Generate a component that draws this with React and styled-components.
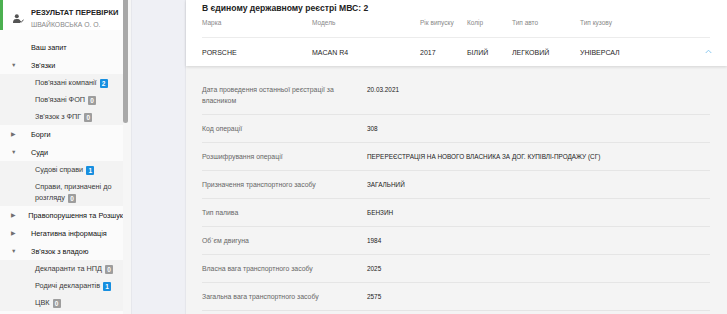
import React from "react";
import styled, { createGlobalStyle } from "styled-components";

const GlobalStyle = createGlobalStyle`
  html, body {
    margin: 0;
    padding: 0;
    overflow: hidden;
  }
  body {
    font-family: "Liberation Sans", Arial, sans-serif;
    -webkit-font-smoothing: antialiased;
  }
`;

const menu = [
  { title: "Ваш запит" },
  {
    title: "Зв'язки",
    open: true,
    children: [
      { title: "Пов'язані компанії", count: 2 },
      { title: "Пов'язані ФОП", count: 0 },
      { title: "Зв'язок з ФПГ", count: 0 },
    ],
  },
  { title: "Борги", open: false },
  {
    title: "Суди",
    open: true,
    children: [
      { title: "Судові справи", count: 1 },
      { title: "Справи, призначені до розгляду", count: 0 },
    ],
  },
  { title: "Правопорушення та Розшук", open: false },
  { title: "Негативна інформація", open: false },
  {
    title: "Зв'язок з владою",
    open: true,
    children: [
      { title: "Декларанти та НПД", count: 0 },
      { title: "Родичі декларантів", count: 1 },
      { title: "ЦВК", count: 0 },
    ],
  },
];

const columns = [
  { label: "Марка", value: "PORSCHE" },
  { label: "Модель", value: "MACAN R4" },
  { label: "Рік випуску", value: "2017" },
  { label: "Колір", value: "БІЛИЙ" },
  { label: "Тип авто", value: "ЛЕГКОВИЙ" },
  { label: "Тип кузову", value: "УНІВЕРСАЛ" },
];

const details = [
  ["Дата проведення останньої реєстрації за власником", "20.03.2021"],
  ["Код операції", "308"],
  ["Розшифрування операції", "ПЕРЕРЕЄСТРАЦІЯ НА НОВОГО ВЛАСНИКА ЗА ДОГ. КУПІВЛІ-ПРОДАЖУ (СГ)"],
  ["Призначення транспортного засобу", "ЗАГАЛЬНИЙ"],
  ["Тип палива", "БЕНЗИН"],
  ["Об`єм двигуна", "1984"],
  ["Власна вага транспортного засобу", "2025"],
  ["Загальна вага транспортного засобу", "2575"],
];

const PersonCheck = () => (
  <svg width="11" height="9" viewBox="0 0 11 9">
    <circle cx="3.8" cy="2.2" r="2" fill="#555" />
    <path d="M0 9 C0 5.6 1.6 5 3.8 5 C6 5 7.2 5.6 7.4 7.2 L7.4 9 Z" fill="#555" />
    <path d="M7 7 L8.3 8.2 L10.6 5.6" fill="none" stroke="#555" strokeWidth="1" />
  </svg>
);

export default function App() {
  return (
    <>
      <GlobalStyle />
      <Page>
        <Sidebar>
          <Nav>
            <Header>
              <HeaderIcon>
                <PersonCheck />
              </HeaderIcon>
              <HeaderText>
                <HeaderTitle>РЕЗУЛЬТАТ ПЕРЕВІРКИ</HeaderTitle>
                <HeaderName>ШВАЙКОВСЬКА О. О.</HeaderName>
              </HeaderText>
            </Header>
            {menu.map((item) => (
              <React.Fragment key={item.title}>
                <TopItem>
                  <Arrow>{item.open === undefined ? "" : item.open ? "▼" : "▶"}</Arrow>
                  {item.title}
                </TopItem>
                {item.open && item.children && (
                  <SubMenu>
                    {item.children.map((c) => (
                      <SubItem key={c.title}>
                        {c.title}
                        <Badge $active={c.count > 0}>{c.count}</Badge>
                      </SubItem>
                    ))}
                  </SubMenu>
                )}
              </React.Fragment>
            ))}
          </Nav>
          <ScrollTrack>
            <Thumb />
          </ScrollTrack>
        </Sidebar>
        <Main>
          <Card>
            <Summary>
              <Title>В єдиному державному реєстрі МВС: 2</Title>
              <HeadRow>
                {columns.map((c) => (
                  <HeadCell key={c.label}>{c.label}</HeadCell>
                ))}
                <span />
              </HeadRow>
              <DataRow>
                {columns.map((c) => (
                  <DataCell key={c.label}>{c.value}</DataCell>
                ))}
                <Chevron>
                  <svg width="7" height="5" viewBox="0 0 7 5">
                    <path d="M0.7 4 L3.5 1.2 L6.3 4" fill="none" stroke="#8cc9f0" strokeWidth="1" />
                  </svg>
                </Chevron>
              </DataRow>
            </Summary>
            <Details>
              {details.map(([label, value]) => (
                <DetailRow key={label}>
                  <DetailLabel>{label}</DetailLabel>
                  <DetailValue>{value}</DetailValue>
                </DetailRow>
              ))}
            </Details>
          </Card>
        </Main>
      </Page>
    </>
  );
}

const Page = styled.div`
  display: flex;
  width: 727px;
  height: 314px;
  overflow: hidden;
  background: #eff0f5;
`;

const Sidebar = styled.div`
  display: flex;
  width: 131px;
  flex-shrink: 0;
  background: #fbfbfb;
  border-right: 1px solid #e6e7ec;
`;

const Nav = styled.div`
  width: 123px;
  display: flex;
  flex-direction: column;
  overflow: hidden;
  white-space: nowrap;
`;

const Header = styled.div`
  display: flex;
  align-items: flex-start;
  height: 30px;
  border-left: 3px solid #4cb050;
  background: #fff;
  margin-bottom: 8px;
`;

const HeaderIcon = styled.div`
  width: 28px;
  padding: 9px 0 0 10px;
  box-sizing: border-box;
`;

const HeaderText = styled.div`
  display: flex;
  flex-direction: column;
  padding-top: 8px;
`;

const HeaderTitle = styled.div`
  font-size: 7.5px;
  line-height: 10px;
  font-weight: 700;
  color: #222;
`;

const HeaderName = styled.div`
  font-size: 6.8px;
  line-height: 10px;
  margin-top: 2px;
  color: #888;
`;

const TopItem = styled.div`
  display: flex;
  align-items: center;
  height: 18px;
  font-size: 7.3px;
  color: #111;
`;

const Arrow = styled.span`
  width: 31px;
  padding-left: 11px;
  box-sizing: border-box;
  font-size: 5.5px;
  color: #6f6f6f;
`;

const SubMenu = styled.div`
  display: flex;
  flex-direction: column;
  background: #f3f3f3;
`;

const SubItem = styled.div`
  padding: 3px 4px 3px 35px;
  font-size: 7.3px;
  line-height: 11px;
  color: #3a3a3a;
  white-space: normal;
`;

const Badge = styled.span`
  display: inline-block;
  min-width: 8px;
  height: 9px;
  margin-left: 3px;
  padding: 0 1px;
  border-radius: 1px;
  box-sizing: border-box;
  background: ${({ $active }) => ($active ? "#178fe0" : "#9d9d9d")};
  color: #fff;
  font-size: 6.5px;
  line-height: 9px;
  font-weight: 700;
  text-align: center;
  vertical-align: middle;
`;

const ScrollTrack = styled.div`
  width: 8px;
  background: #f6f6f6;
`;

const Thumb = styled.div`
  width: 5px;
  height: 123px;
  background: #a8a8a8;
  border-radius: 0 0 3px 3px;
`;

const Main = styled.div`
  flex: 1;
  display: flex;
  padding-left: 54px;
`;

const Card = styled.div`
  flex: 1;
  display: flex;
  flex-direction: column;
  background: #f4f4f4;
  box-shadow: -1px 0 1px rgba(0, 0, 0, 0.04);
`;

const Summary = styled.div`
  background: #fff;
  padding: 0 17px 0 16px;
  box-shadow: 0 1px 3px rgba(0, 0, 0, 0.14);
  position: relative;
  z-index: 1;
`;

const Title = styled.div`
  height: 16px;
  line-height: 16px;
  font-size: 8.6px;
  font-weight: 700;
  color: #222;
`;

const grid = `
  display: grid;
  grid-template-columns: 110px 108px 47px 45px 68px 1fr 14px;
`;

const HeadRow = styled.div`
  ${grid}
  height: 22px;
  padding-top: 2px;
  box-sizing: border-box;
  border-bottom: 1px solid #ececec;
`;

const HeadCell = styled.div`
  font-size: 6.5px;
  line-height: 10px;
  color: #888;
`;

const DataRow = styled.div`
  ${grid}
  height: 28px;
  align-items: center;
`;

const DataCell = styled.div`
  font-size: 7px;
  color: #1e1e1e;
`;

const Chevron = styled.div`
  display: flex;
  align-items: center;
  justify-content: flex-end;
  margin: -2px -2px 0 0;
`;

const Details = styled.div`
  display: flex;
  flex-direction: column;
  padding: 10px 17px 0 16px;
`;

const DetailRow = styled.div`
  display: flex;
  padding: 8px 0;
  border-bottom: 1px solid #e5e5e5;
  line-height: 11px;
`;

const DetailLabel = styled.div`
  width: 150px;
  margin-right: 15px;
  font-size: 6.9px;
  color: #666;
`;

const DetailValue = styled.div`
  flex: 1;
  font-size: 6.4px;
  color: #1a1a1a;
`;
